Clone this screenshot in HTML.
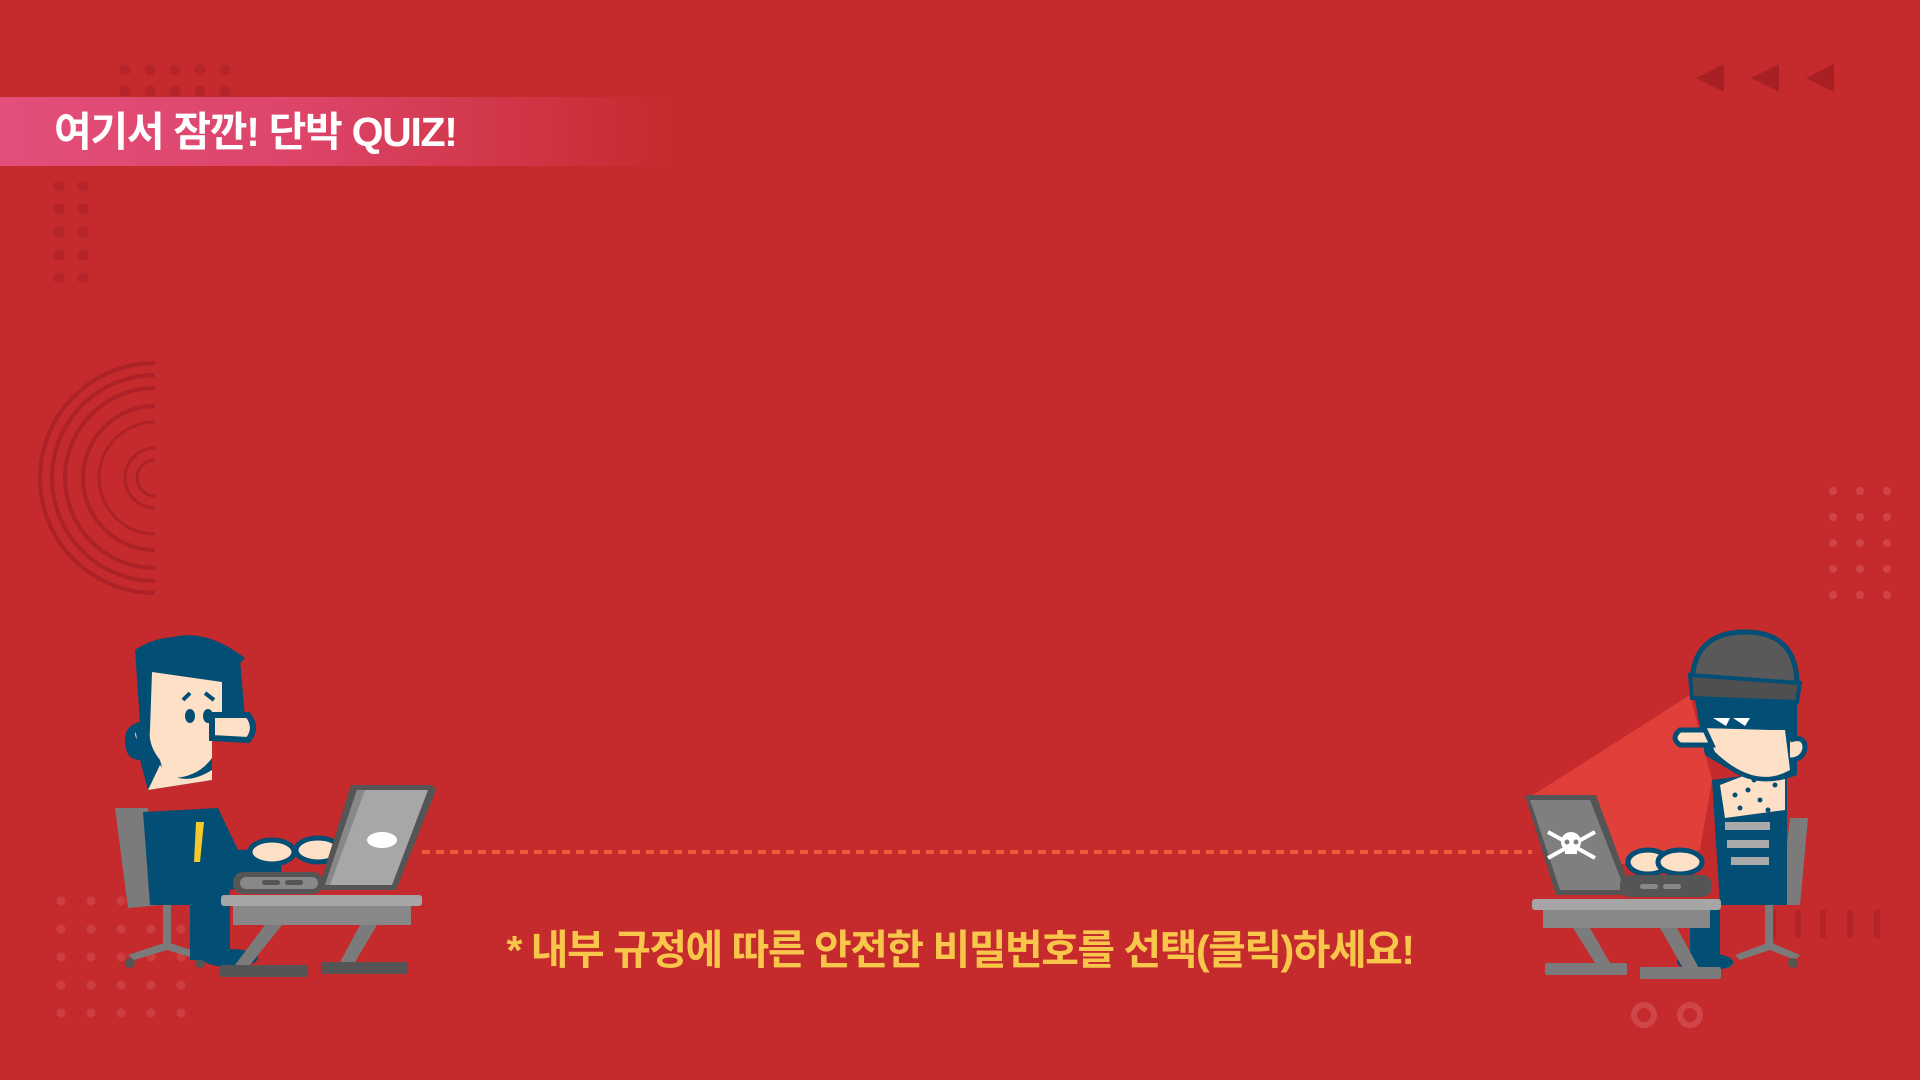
<!DOCTYPE html>
<html><head><meta charset="utf-8"><style>
html,body{margin:0;padding:0;width:1920px;height:1080px;overflow:hidden;background:#c52a2c;}
body{position:relative;font-family:"Liberation Sans","Noto Sans CJK KR",sans-serif;}
.banner{position:absolute;left:0;top:97px;width:680px;height:69px;background:linear-gradient(90deg,#e34f7b 0%,#dd4468 45%,rgba(197,42,44,0) 100%);}
.title{position:absolute;left:54px;top:104px;font-size:41px;font-weight:bold;color:#fff;letter-spacing:-1.3px;line-height:56px;}
.bottom{position:absolute;left:0;width:1920px;top:916px;text-align:center;font-size:41px;font-weight:bold;color:#f8c64a;letter-spacing:-1.5px;}
svg{position:absolute;left:0;top:0;}
</style></head><body>
<svg width="1920" height="1080" viewBox="0 0 1920 1080">
<defs>
<pattern id="dp" x="119" y="64" width="25" height="21" patternUnits="userSpaceOnUse"><circle cx="6" cy="6" r="5.5" fill="#b52428"/></pattern>
<pattern id="dpl" x="53" y="180" width="24" height="23" patternUnits="userSpaceOnUse"><circle cx="6" cy="6" r="5.5" fill="#b52428"/></pattern>
<pattern id="dp2" x="1828" y="486" width="27" height="26" patternUnits="userSpaceOnUse"><circle cx="5" cy="5" r="4" fill="#d04447"/></pattern>
<pattern id="dp3" x="56" y="896" width="30" height="28" patternUnits="userSpaceOnUse"><circle cx="5" cy="5" r="4.5" fill="#cc3e40"/></pattern>
<clipPath id="arc"><rect x="0" y="300" width="155" height="340"/></clipPath>
</defs>
<rect x="119" y="64" width="125" height="42" fill="url(#dp)"/>
<rect x="53" y="180" width="48" height="115" fill="url(#dpl)"/>
<rect x="1828" y="486" width="81" height="124" fill="url(#dp2)"/>
<rect x="56" y="896" width="140" height="130" fill="url(#dp3)"/>
<g clip-path="url(#arc)" fill="none" stroke="#ad2226" stroke-width="4">
<circle cx="155" cy="478" r="115"/><circle cx="155" cy="478" r="103"/><circle cx="155" cy="478" r="90"/><circle cx="155" cy="478" r="72"/><circle cx="155" cy="478" r="56" stroke-width="3"/><circle cx="155" cy="478" r="30" stroke-width="3"/><circle cx="155" cy="478" r="18" stroke-width="3"/>
</g>
<g fill="#a81f24"><polygon points="1696,78 1724,64 1724,92"/><polygon points="1751,78 1779,64 1779,92"/><polygon points="1806,78 1834,64 1834,92"/></g>
<g fill="#b32427"><rect x="1770" y="910" width="6" height="28"/><rect x="1795" y="910" width="6" height="28"/><rect x="1820" y="910" width="6" height="28"/><rect x="1847" y="910" width="6" height="28"/><rect x="1874" y="910" width="6" height="28"/></g>
<g fill="none" stroke="#cf4648" stroke-width="6"><circle cx="1644" cy="1015" r="10"/><circle cx="1690" cy="1015" r="10"/></g>
<line x1="422" y1="852" x2="1532" y2="852" stroke="#f15a36" stroke-width="4" stroke-dasharray="8 6"/>

<g>
<polygon points="115,808 148,808 160,905 128,908" fill="#7b7b7b"/>
<rect x="163" y="905" width="8" height="40" fill="#7b7b7b"/>
<polygon points="128,955 167,942 206,955 200,960 167,950 134,960" fill="#7b7b7b"/>
<circle cx="130" cy="963" r="5" fill="#555"/><circle cx="200" cy="963" r="5" fill="#555"/>
<rect x="190" y="900" width="40" height="60" fill="#034e74"/>
<ellipse cx="230" cy="958" rx="28" ry="9" fill="#034e74"/>
<polygon points="143,812 218,808 238,850 280,848 282,880 230,890 227,905 150,905" fill="#034e74"/>
<polygon points="196,822 204,822 200,862 194,862" fill="#f4c92b"/>
<path d="M135,650 Q180,620 240,660 L245,718 L212,735 L212,780 L148,790 L140,760 Q125,760 125,740 Q125,725 140,722 Z" fill="#034e74"/>
<path d="M152,672 L222,682 L222,718 L212,722 L212,758 Q196,780 165,778 L160,760 Q148,745 150,730 Z" fill="#fde0c6"/>
<path d="M160,765 Q180,790 212,770 L212,780 L148,790 Z" fill="#fde0c6"/>
<path d="M212,715 L248,715 Q258,728 248,740 L212,738 Z" fill="#fde0c6" stroke="#034e74" stroke-width="6"/>
<path d="M138,745 Q128,735 135,728" stroke="#034e74" stroke-width="6" fill="#fde0c6"/>
<ellipse cx="190" cy="716" rx="5" ry="7" fill="#034e74"/><ellipse cx="208" cy="716" rx="5" ry="7" fill="#034e74"/>
<path d="M183,700 L190,693 M205,693 L214,700" stroke="#034e74" stroke-width="4"/>
<path d="M155,645 Q195,620 245,658 L232,672 Q200,660 150,672 Z" fill="#034e74"/>
<ellipse cx="272" cy="852" rx="22" ry="12" fill="#fde0c6" stroke="#034e74" stroke-width="5"/>
<ellipse cx="318" cy="850" rx="22" ry="12" fill="#fde0c6" stroke="#034e74" stroke-width="5"/>
<path d="M351,785 L432,785 Q437,788 434,795 L396,890 L318,890 Z" fill="#555"/>
<path d="M357,790 L428,790 L392,885 L325,885 Z" fill="#a7a7a7"/>
<path d="M357,790 L365,790 L330,885 L325,885 Z" fill="#888"/>
<ellipse cx="382" cy="840" rx="15" ry="8" fill="#fff"/>
<rect x="233" y="872" width="90" height="22" rx="10" fill="#555"/>
<rect x="240" y="877" width="78" height="12" rx="6" fill="#888"/>
<rect x="262" y="880" width="18" height="5" rx="2.5" fill="#555"/><rect x="285" y="880" width="18" height="5" rx="2.5" fill="#555"/>
<rect x="221" y="895" width="201" height="11" rx="3" fill="#a6a6a6"/>
<rect x="233" y="906" width="178" height="19" fill="#888"/>
<polygon points="265,925 282,925 250,965 235,965" fill="#7b7b7b"/>
<polygon points="360,925 377,925 355,962 340,962" fill="#7b7b7b"/>
<rect x="220" y="965" width="88" height="12" rx="2" fill="#555"/>
<rect x="321" y="962" width="87" height="12" rx="2" fill="#555"/>
</g>

<g>
<polygon points="1533,795 1690,695 1712,780 1700,850 1590,870" fill="#e8473f" opacity="0.75"/>
<polygon points="1790,818 1808,818 1800,905 1780,905" fill="#7b7b7b"/>
<rect x="1765" y="905" width="8" height="40" fill="#7b7b7b"/>
<polygon points="1735,955 1770,942 1800,955 1795,960 1770,950 1740,960" fill="#7b7b7b"/>
<circle cx="1728" cy="963" r="5" fill="#555"/><circle cx="1793" cy="963" r="5" fill="#555"/>
<rect x="1690" y="905" width="30" height="60" fill="#034e74"/>
<ellipse cx="1705" cy="962" rx="28" ry="9" fill="#034e74"/>
<polygon points="1712,780 1787,770 1787,905 1720,905" fill="#034e74"/>
<g fill="#aaa"><rect x="1725" y="822" width="45" height="8"/><rect x="1727" y="840" width="42" height="8"/><rect x="1731" y="857" width="38" height="8"/></g>
<polygon points="1720,785 1785,760 1785,810 1725,818" fill="#fde0c6"/>
<g fill="#034e74"><circle cx="1735" cy="795" r="2.5"/><circle cx="1748" cy="790" r="2.5"/><circle cx="1760" cy="800" r="2.5"/><circle cx="1775" cy="785" r="2.5"/><circle cx="1740" cy="808" r="2.5"/><circle cx="1768" cy="810" r="2.5"/><circle cx="1778" cy="770" r="2.5"/><circle cx="1754" cy="780" r="2.5"/></g>
<path d="M1695,700 L1797,700 L1797,775 Q1760,790 1730,770 L1705,755 Z" fill="#034e74"/>
<path d="M1705,728 L1770,730 L1785,730 L1790,770 Q1755,790 1715,752 Z" fill="#fde0c6"/>
<path d="M1700,705 L1790,705 L1790,730 L1703,728 Z" fill="#034e74"/>
<path d="M1713,718 L1730,718 L1726,726 Z M1733,718 L1750,718 L1745,726 Z" fill="#fff"/>
<path d="M1705,730 L1680,730 Q1670,738 1680,745 L1712,745 Z" fill="#fde0c6" stroke="#034e74" stroke-width="5"/>
<path d="M1790,740 Q1805,735 1805,748 Q1803,760 1790,760" fill="#fde0c6" stroke="#034e74" stroke-width="5"/>
<path d="M1692,680 Q1695,632 1745,632 Q1797,632 1797,685 Z" fill="#595959" stroke="#034e74" stroke-width="5"/>
<polygon points="1690,675 1800,683 1797,702 1692,698" fill="#4f4f4f" stroke="#034e74" stroke-width="4"/>
<ellipse cx="1648" cy="862" rx="20" ry="12" fill="#fde0c6" stroke="#034e74" stroke-width="5"/>
<ellipse cx="1680" cy="862" rx="22" ry="12" fill="#fde0c6" stroke="#034e74" stroke-width="5"/>
<path d="M1525,795 L1596,795 L1633,895 L1556,895 Z" fill="#555"/>
<path d="M1530,800 L1590,800 L1625,890 L1560,890 Z" fill="#7f7f7f"/>
<g fill="#fff"><circle cx="1571" cy="842" r="10"/><rect x="1565" y="848" width="12" height="6"/><path d="M1548,832 L1595,858 M1595,832 L1548,858" stroke="#fff" stroke-width="4"/></g>
<circle cx="1567" cy="842" r="2.5" fill="#7f7f7f"/><circle cx="1576" cy="842" r="2.5" fill="#7f7f7f"/>
<rect x="1620" y="875" width="92" height="22" rx="10" fill="#555"/>
<rect x="1640" y="884" width="18" height="5" rx="2.5" fill="#888"/><rect x="1663" y="884" width="18" height="5" rx="2.5" fill="#888"/>
<rect x="1532" y="899" width="189" height="11" rx="3" fill="#a6a6a6"/>
<rect x="1543" y="910" width="167" height="18" fill="#888"/>
<polygon points="1573,928 1590,928 1610,963 1595,963" fill="#7b7b7b"/>
<polygon points="1660,928 1677,928 1700,970 1684,970" fill="#7b7b7b"/>
<rect x="1545" y="963" width="82" height="12" rx="2" fill="#7b7b7b"/>
<rect x="1640" y="967" width="81" height="12" rx="2" fill="#7b7b7b"/>
</g>
</svg>
<div class="banner"></div>
<div class="title">여기서 잠깐! 단박 QUIZ!</div>
<div class="bottom">* 내부 규정에 따른 안전한 비밀번호를 선택(클릭)하세요!</div>
</body></html>
